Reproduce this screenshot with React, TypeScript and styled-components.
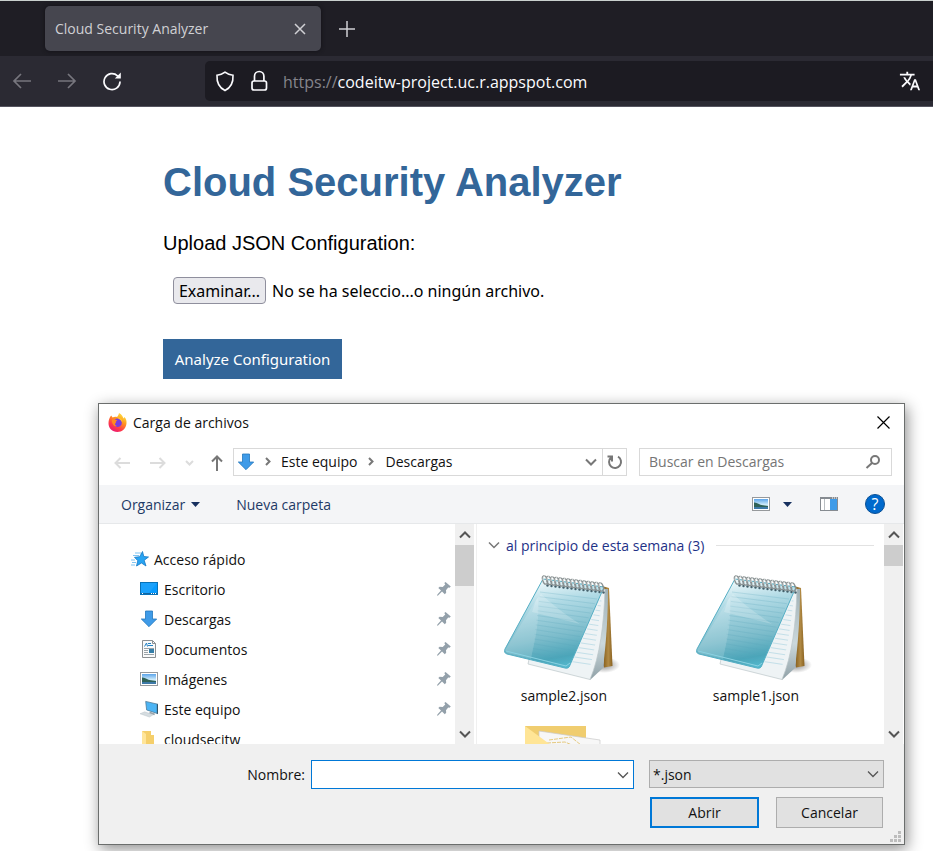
import React from "react";
import styled, { createGlobalStyle } from "styled-components";

const uiFont = `"Open Sans", "Noto Sans", sans-serif`;

const GlobalStyle = createGlobalStyle`
  * { box-sizing: border-box; }
  body { margin: 0; background: #fff; }
  button, input, select { font: inherit; color: inherit; margin: 0; }
  button { padding: 0; border: 0; background: none; cursor: pointer; }
  svg { display: block; flex: none; }
`;

/* ---------- browser chrome ---------- */

const Page = styled.div`
  position: relative;
  min-height: 100vh;
  overflow: hidden;
  font-family: ${uiFont};
`;

const TabStrip = styled.div`
  display: flex;
  align-items: center;
  gap: 12px;
  height: 56px;
  padding: 0 45px;
  background: #1f1e25;
  border-top: 1px solid #c9d0ce;
`;

const Tab = styled.div`
  display: flex;
  align-items: center;
  justify-content: space-between;
  width: 276px;
  height: 45px;
  padding: 0 11px 0 10px;
  border-radius: 5px;
  background: #46464f;
  box-shadow: 0 0 4px #111016;
  color: #d0d0d4;
  font-size: 14px;
`;

const ChromeButton = styled.button<{ $size: number; $color: string }>`
  display: grid;
  place-items: center;
  width: ${(p) => p.$size}px;
  height: ${(p) => p.$size}px;
  color: ${(p) => p.$color};
`;

const NavBar = styled.div`
  display: flex;
  align-items: center;
  height: 51px;
  padding-left: 9px;
  background: #2b2a33;
  border-bottom: 1px solid #55545f;
`;

const NavButtons = styled.div`
  display: flex;
  gap: 19px;
  width: 196px;
  flex: none;
`;

const AddressBar = styled.div`
  display: flex;
  align-items: center;
  flex: 1;
  gap: 15px;
  height: 40px;
  padding: 0 11px 0 10px;
  border-radius: 5px 0 0 5px;
  background: #1c1b22;
  color: #fbfbfe;
`;

const Address = styled.span`
  flex: 1;
  padding-top: 2px;
  font-size: 16px;
`;

const Scheme = styled.span`
  color: #85858c;
`;

/* ---------- web page ---------- */

const Main = styled.main`
  padding: 51px 163px 0;
`;

const Title = styled.h1`
  margin: 0;
  color: #369;
  font: bold 40px/48px "Liberation Sans", Arial, sans-serif;
`;

const UploadLabel = styled.label`
  display: block;
  margin-top: 25px;
  font: 20px/24px "Liberation Sans", Arial, sans-serif;
`;

const FilePicker = styled.div`
  display: flex;
  align-items: center;
  gap: 6px;
  margin: 22px 0 35px;
  padding-left: 10px;
  font-family: "Noto Sans", sans-serif;
  font-size: 16px;
  white-space: nowrap;
`;

const HiddenFile = styled.input`
  position: absolute;
  width: 1px;
  height: 1px;
  opacity: 0;
`;

const BrowseButton = styled.label`
  display: grid;
  place-items: center;
  width: 93px;
  height: 27px;
  border: 1px solid #8f8f9d;
  border-radius: 4px;
  background: #e9e9ed;
`;

const AnalyzeButton = styled.button`
  width: 179px;
  height: 40px;
  background: #369;
  color: #fff;
  font-family: "Noto Sans", sans-serif;
  font-size: 15px;
  white-space: nowrap;
`;

/* ---------- file dialog ---------- */

const Dialog = styled.section`
  position: absolute;
  top: 403px;
  left: 98px;
  right: 28px;
  border: 1px solid #6b6e6d;
  background: #fff;
  box-shadow: 2px 4px 14px rgba(0, 0, 0, 0.45);
  color: #111;
  font-size: 14px;
`;

const DialogHead = styled.header`
  display: flex;
  align-items: center;
  gap: 6px;
  height: 36px;
  padding: 0 14px 0 9px;
`;

const DialogTitle = styled.h2`
  flex: 1;
  margin: 0;
  font-size: 14px;
  font-weight: 400;
`;

const IconButton = styled.button<{ $w?: number }>`
  display: grid;
  place-items: center;
  width: ${(p) => p.$w ?? 20}px;
  height: 24px;
`;

const LocationRow = styled.div`
  display: flex;
  align-items: center;
  height: 45px;
  padding: 0 12px 2px;
`;

const History = styled.div`
  display: flex;
  align-items: center;
  justify-content: space-between;
  width: 115px;
  padding: 2px 3px 0 1px;
  flex: none;
`;

const PathBox = styled.nav`
  display: flex;
  align-items: center;
  flex: 1;
  height: 28px;
  margin: 0 12px 0 7px;
  border: 1px solid #d9d9d9;
`;

const Crumbs = styled.div`
  display: flex;
  align-items: center;
  flex: 1;
  gap: 10px;
  padding-left: 3px;
`;

const CrumbArrow = styled.span`
  padding: 0 1px;
`;

const Refresh = styled.button`
  display: grid;
  place-items: center;
  width: 24px;
  height: 26px;
  border-left: 1px solid #d9d9d9;
`;

const SearchBox = styled.label`
  display: flex;
  align-items: center;
  width: 253px;
  height: 28px;
  padding: 0 10px 0 9px;
  border: 1px solid #d9d9d9;
`;

const SearchInput = styled.input`
  flex: 1;
  min-width: 0;
  padding: 0;
  border: 0;
  outline: 0;
  background: none;
  &::placeholder { color: #757575; opacity: 1; }
`;

const Toolbar = styled.div`
  display: flex;
  align-items: center;
  height: 39px;
  padding: 0 19px 0 22px;
  border-bottom: 1px solid #e6e8ea;
  background: #f4f5f7;
  color: #1e3a66;
`;

const ToolButton = styled.button<{ $gap?: number }>`
  display: flex;
  align-items: center;
  gap: 6px;
  margin-right: ${(p) => p.$gap ?? 0}px;
`;

const Spacer = styled.div`
  flex: 1;
`;

const Help = styled.button`
  width: 20px;
  height: 20px;
  border: 1px solid #0a4f94;
  border-radius: 50%;
  background: #0069cc;
  color: #fff;
  font-size: 16px;
  line-height: 18px;
`;

const Panes = styled.div`
  display: flex;
  height: 220px;
  padding-right: 1px;
  overflow: hidden;
`;

const Tree = styled.ul`
  width: 356px;
  flex: none;
  margin: 0;
  padding: 20px 4px 0 32px;
  list-style: none;
`;

const TreeRow = styled.li<{ $nested?: boolean }>`
  display: flex;
  align-items: center;
  gap: ${(p) => (p.$nested ? 6 : 5)}px;
  height: 30px;
  padding-left: ${(p) => (p.$nested ? 9 : 0)}px;
`;

const TreeLink = styled.a`
  flex: 1;
  color: inherit;
  text-decoration: none;
`;

const ScrollTrack = styled.div`
  display: flex;
  flex-direction: column;
  width: 19px;
  flex: none;
  background: #f0f0f0;
`;

const ScrollStep = styled.button`
  display: grid;
  place-items: center;
  height: 21px;
`;

const ScrollThumb = styled.div<{ $h: number }>`
  height: ${(p) => p.$h}px;
  background: #cdcdcd;
`;

const Files = styled.div`
  flex: 1;
  min-width: 0;
  margin-left: 2px;
  padding: 9px 10px 0 11px;
  border-left: 1px solid #f0f0f0;
`;

const GroupHeading = styled.div`
  display: flex;
  align-items: center;
  gap: 6px;
  height: 24px;
  color: #1e3287;
  white-space: nowrap;
  &::after {
    content: "";
    flex: 1;
    height: 1px;
    margin-left: 6px;
    background: #e2e2e2;
  }
`;

const Tiles = styled.div`
  display: grid;
  grid-template-columns: repeat(auto-fill, 120px);
  column-gap: 72px;
  row-gap: 20px;
  padding: 15px 0 0 16px;
`;

const Tile = styled.button`
  display: flex;
  flex-direction: column;
  align-items: center;
  gap: 2px;
  line-height: 20px;
`;

const Footer = styled.footer`
  display: grid;
  grid-template-columns: 1fr 235px;
  gap: 8px 15px;
  height: 100px;
  padding: 16px 20px 15px;
  align-content: start;
  background: #f0f0f0;
`;

const NameField = styled.div`
  display: flex;
  align-items: center;
  justify-content: flex-end;
  gap: 6px;
`;

const Combo = styled.div<{ $active?: boolean }>`
  display: grid;
  align-items: center;
  width: ${(p) => (p.$active ? "323px" : "auto")};
  height: ${(p) => (p.$active ? 29 : 28)}px;
  border: 1px solid ${(p) => (p.$active ? "#0078d7" : "#adadad")};
  background: ${(p) => (p.$active ? "#fff" : "#e1e1e1")};
  & > * { grid-area: 1 / 1; }
  & > svg { justify-self: end; margin-right: 4px; pointer-events: none; }
`;

const NameInput = styled.input`
  width: 100%;
  padding: 0 24px 0 4px;
  border: 0;
  outline: 0;
  background: none;
`;

const TypeSelect = styled.select`
  width: 100%;
  height: 26px;
  padding: 0 3px;
  appearance: none;
  border: 0;
  background: none;
`;

const Actions = styled.div`
  grid-column: 2;
  display: flex;
  gap: 17px;
  padding: 0 1px;
`;

const ActionButton = styled.button<{ $primary?: boolean }>`
  flex: 1;
  height: 31px;
  border: ${(p) => (p.$primary ? "2px solid #0078d7" : "1px solid #adadad")};
  background: #e1e1e1;
`;

const Grip = styled.div`
  position: absolute;
  right: 3px;
  bottom: 2px;
`;

/* ---------- icons ---------- */

type LineProps = { d: string; w?: number; h?: number; color?: string; stroke?: number };

const Line = ({ d, w = 20, h = 20, color = "currentColor", stroke = 2 }: LineProps) => (
  <svg width={w} height={h} viewBox={`0 0 ${w} ${h}`} fill="none" stroke={color} strokeWidth={stroke} aria-hidden="true">
    <path d={d} />
  </svg>
);

const Chevron = ({ color = "#555", stroke = 1.5 }: { color?: string; stroke?: number }) => (
  <Line w={12} h={8} d="M1 1.5L6 6.5L11 1.5" color={color} stroke={stroke} />
);

const Caret = () => (
  <svg width="9" height="5" viewBox="0 0 9 5" aria-hidden="true">
    <path d="M0 0h9L4.500 5z" fill="#17305f" />
  </svg>
);

const ReloadIcon = () => (
  <svg width="20" height="20" viewBox="0 0 20 20" aria-hidden="true">
    <path d="M18 11A8 8 0 1 1 15.500 4.800" fill="none" stroke="#fbfbfe" strokeWidth="1.700" strokeLinecap="round" />
    <path d="M18.800 1.500v6H12.800z" fill="#fbfbfe" />
  </svg>
);

const ShieldIcon = () => (
  <Line d="M10 1.200C12.300 3 15 4 18 4.200C18.400 11 16 16.500 10 19.500C4 16.500 1.600 11 2 4.200C5 4 7.700 3 10 1.200Z" h={21} stroke={1.600} />
);

const LockIcon = () => (
  <svg width="18" height="22" viewBox="0 0 18 22" fill="none" stroke="#fbfbfe" strokeWidth="1.700" aria-hidden="true">
    <rect x="2" y="11" width="14.500" height="9" rx="2" />
    <path d="M4.500 11V6.300a4.700 4.800 0 0 1 9.400 0V11" />
  </svg>
);

const TranslateIcon = () => (
  <svg width="22" height="22" viewBox="0 0 24 24" fill="#fbfbfe" aria-hidden="true">
    <path d="M12.870 15.070l-2.540-2.510.030-.030A17.520 17.520 0 0 0 14.070 6H17V4h-7V2H8v2H1v2h11.170C11.500 7.920 10.440 9.750 9 11.350 8.070 10.320 7.300 9.190 6.690 8h-2c.730 1.630 1.730 3.170 2.980 4.560l-5.090 5.020L4 19l5-5 3.110 3.110.760-2.040zM18.500 10h-2L12 22h2l1.120-3h4.750L21 22h2l-4.500-12zm-2.620 7l1.620-4.330L19.120 17h-3.240z" />
  </svg>
);

const FirefoxIcon = () => (
  <svg width="19" height="19" viewBox="0 0 19 19" aria-hidden="true">
    <defs>
      <linearGradient id="ffBody" x1="0.8" y1="0" x2="0.2" y2="1">
        <stop offset="0" stopColor="#fff04a" />
        <stop offset="0.35" stopColor="#ff9a1f" />
        <stop offset="0.7" stopColor="#ff3b48" />
        <stop offset="1" stopColor="#e8127b" />
      </linearGradient>
    </defs>
    <path d="M3.200 2.500L4.600 4.500C6 3.800 7.500 3.700 9 4C10 3.200 10.700 1.700 11 0C14 1.500 15 4 15.500 5.500L16.500 4C18.300 6 18.700 8 18.500 10.500C18 15.500 14 19 9.400 19C4.200 19 .5 15 .5 10.200C.5 7 1.500 4.500 3.200 2.500Z" fill="url(#ffBody)" />
    <circle cx="9.500" cy="9.800" r="4.300" fill="#7a3be0" />
    <path d="M4 6.500C6 5.800 8 6.500 9.500 7.800C8 8 7.500 8.800 8 9.800C6.600 10.400 6.700 12.600 9 13C6.500 14.500 3.500 11 4 6.500Z" fill="#ff8a21" />
    <path d="M9 4.500C12 4 14.500 6 14.300 9.500C13.300 7 11.500 6.200 9 4.500Z" fill="#ffc52e" />
  </svg>
);

const DownArrowIcon = () => (
  <svg width="18" height="18" viewBox="0 0 18 18" aria-hidden="true">
    <path d="M5.500 1h7v8h4.200L9 16.700L1.300 9h4.200z" fill="#3f9be8" stroke="#2377bd" strokeWidth="0.8" />
  </svg>
);

const StarIcon = () => (
  <svg width="18" height="18" viewBox="0 0 18 18" aria-hidden="true">
    <path d="M4 3h6M2 5.500h6M0 10h4M1 12.500h4M0 15h4" stroke="#7fc4f2" />
    <path d="M11.500 1.500l1.300 5l4.700.5l-4.300 3.300l1.800 5.700L10.500 13L5.500 16l1.300-5.300L3.500 7.300l5.200-.6z" fill="#28a4f2" stroke="#1577c4" strokeWidth="0.800" />
  </svg>
);

const DesktopIcon = () => (
  <svg width="18" height="14" viewBox="0 0 18 14" aria-hidden="true">
    <rect x="0.500" y="0.500" width="17" height="12" fill="#1ba1fb" stroke="#0872b8" />
    <path d="M17 1v11H8z" fill="#079bff" />
    <path d="M1 11.500h16" stroke="#1265a0" />
    <path d="M2 11.500h2M11 11.500h5" stroke="#fff" strokeDasharray="1 1" />
  </svg>
);

const DocumentIcon = () => (
  <svg width="18" height="18" viewBox="0 0 18 18" aria-hidden="true">
    <path d="M2.500.5h10l3 3v14h-13z" fill="#fafafa" stroke="#8b8f92" />
    <path d="M12.500.5v3h3" fill="none" stroke="#8b8f92" />
    <path d="M4.500 6.500L6.500 3l1 3.500M8 3.500h3M8 5.500h5" fill="none" stroke="#2483c6" />
    <path d="M4 8.500h10M4 10.500h4M4 12.500h4M4 14.500h10" stroke="#9ba3a8" />
    <rect x="9" y="9" width="5" height="4" fill="#357ea8" />
  </svg>
);

const PictureIcon = () => (
  <svg width="18" height="14" viewBox="0 0 18 14" aria-hidden="true">
    <defs>
      <linearGradient id="sky" x2="0" y2="1">
        <stop offset="0" stopColor="#5ba4ea" />
        <stop offset="0.6" stopColor="#d6f0fb" />
        <stop offset="1" stopColor="#4282ae" />
      </linearGradient>
    </defs>
    <rect x="0.500" y="0.500" width="17" height="13" fill="#fff" stroke="#96999c" />
    <rect x="2" y="2" width="14" height="10" fill="url(#sky)" />
    <path d="M2 5.500C5 5 7 8 11 8.200L16 9v1H2z" fill="#2f6258" />
    <path d="M2 10h14v2H2z" fill="#3d79a8" />
  </svg>
);

const ComputerIcon = () => (
  <svg width="18" height="18" viewBox="0 0 19 18" aria-hidden="true">
    <path d="M6 1l13 3v10L7 10z" fill="#4cb4f4" stroke="#4c7793" strokeWidth="0.800" />
    <path d="M18.500 4v10" stroke="#335469" strokeWidth="1.500" />
    <path d="M11 12l5 2l-1 1.500l-6-2z" fill="#98a3aa" />
    <path d="M0 14l5-2l9 3l-4 2.500z" fill="#d5dce0" stroke="#b9c3c9" strokeWidth="0.500" />
  </svg>
);

const SmallFolderIcon = () => (
  <svg width="18" height="18" viewBox="0 0 18 18" aria-hidden="true">
    <path d="M2 1h9v4h3v13H2z" fill="#f5cf6b" />
    <path d="M2 1l4 3v14H2z" fill="#ffe59a" />
  </svg>
);

const PinIcon = () => (
  <svg width="14" height="14" viewBox="0 0 14 14" aria-hidden="true">
    <path d="M8.500 0L13.800 4.500L12.500 5.800L11.200 5.500L9 8.200L9.200 10.800L7.800 12.200L5 9.600L1 13.500L0 13.800L.4 12.600L4 8.500L1.300 6L2.700 4.700L5.700 4.900L8.300 2.500L7.300 1Z" fill="#93a0aa" />
  </svg>
);

const PreviewPaneIcon = () => (
  <svg width="18" height="14" viewBox="0 0 18 14" aria-hidden="true">
    <rect x="0.500" y="0.500" width="17" height="13" fill="#fff" stroke="#868b91" />
    <path d="M0 1h18" stroke="#868b91" strokeWidth="2" />
    <path d="M4.500 2v11" stroke="#b9bec2" />
    <rect x="10" y="2" width="7" height="11" fill="#3f9be8" />
    <path d="M12 1h5" stroke="#fff" strokeDasharray="1 1" />
  </svg>
);

const rings = Array.from({ length: 15 }, (_, i) => ({ x: 41 + i * 4, y: 6 + i * 0.5 }));
const rules = Array.from({ length: 14 }, (_, i) => i);

const NotepadIcon = () => (
  <svg width="120" height="112" viewBox="0 0 120 112" aria-hidden="true">
    <defs>
      <linearGradient id="npCover" x1="0.35" y1="0" x2="0.55" y2="1">
        <stop offset="0" stopColor="#f3fbfd" />
        <stop offset="0.28" stopColor="#b0dae5" />
        <stop offset="0.65" stopColor="#7cbccb" />
        <stop offset="0.88" stopColor="#4ba5b9" />
        <stop offset="1" stopColor="#54b9ce" />
      </linearGradient>
      <linearGradient id="npBack" x2="1" y2="0">
        <stop offset="0" stopColor="#7b5311" />
        <stop offset="0.6" stopColor="#b18a45" />
        <stop offset="1" stopColor="#8a6220" />
      </linearGradient>
      <linearGradient id="npEdge" x2="0" y2="1">
        <stop offset="0" stopColor="#9fb0b5" />
        <stop offset="0.6" stopColor="#cbd8dc" />
        <stop offset="1" stopColor="#8fa0a6" />
      </linearGradient>
      <radialGradient id="npShadow">
        <stop offset="0" stopColor="#000" stopOpacity="0.45" />
        <stop offset="1" stopColor="#000" stopOpacity="0" />
      </radialGradient>
      <clipPath id="npSheet">
        <path d="M98 24L65 97L28 91L26 92L83 103C91 84 95 50 98 24Z" />
      </clipPath>
    </defs>
    <ellipse cx="100" cy="93" rx="16" ry="8" fill="url(#npShadow)" />
    <path d="M98 14L105 16L108.500 94L100 95.500Z" fill="url(#npBack)" />
    <path d="M100 17L104 17C104 45 102 72 99 96L86 108Z" fill="url(#npEdge)" />
    <path d="M101 17C100 52 96 84 86 107.500L24 92L40 20Z" fill="#eef3f5" stroke="#bcc5c9" strokeWidth="0.700" />
    <g clipPath="url(#npSheet)" stroke="#b7d9e5" strokeWidth="0.800">
      {rules.map((i) => (
        <path key={i} d={`M24 ${18 + i * 5}L104 ${30 + i * 5}`} />
      ))}
    </g>
    <path d="M39 7L100 15L66 93Q65 97 61 96L3 82Q-.5 81 1 77Z" fill="url(#npCover)" stroke="#55aec4" strokeWidth="1" />
    <g stroke="#5aa7bc" strokeWidth="0.500" opacity="0.5">
      {rules.map((i) => (
        <path key={i} d={`M${36 - i * 0.600} ${20 + i * 4.700}L${93 - i * 2.100} ${27 + i * 4.700}`} />
      ))}
    </g>
    <path d="M34 25C36 48 31 68 27 87L3 81L1 78Z" fill="#fff" opacity="0.15" />
    <path d="M37 22C48 32 60 42 76 52L28 40L32 28Z" fill="#fff" opacity="0.2" />
    <path d="M2 79L62 94L66 91" fill="none" stroke="#8bd2e2" strokeWidth="1" />
    {rings.map(({ x, y }) => (
      <g key={x}>
        <circle cx={x + 2.500} cy={y + 7.500} r="1.200" fill="#44606b" />
        <ellipse cx={x} cy={y + 2} rx="2.300" ry="4.300" fill="none" stroke="#8a9192" strokeWidth="1.300" transform={`rotate(-18 ${x} ${y + 2})`} />
        <path d={`M${x - 2} ${y + 2}q-.5-4 2.500-4.500`} fill="none" stroke="#dfe4e4" strokeWidth="0.900" />
      </g>
    ))}
  </svg>
);

const FolderIcon = () => (
  <svg width="82" height="80" viewBox="0 0 82 80" aria-hidden="true">
    <path d="M2 0h61v80H2z" fill="#f0cd6f" />
    <path d="M16 5L77 14V80H16z" fill="#f7f7f7" stroke="#c9c9c9" strokeWidth="0.700" />
    <path d="M26 14L48 11L58 19M24 17L42 16L56 22" fill="none" stroke="#e5c97f" strokeDasharray="4 1" />
    <path d="M2 0L36 25V80H2z" fill="#ffe596" />
  </svg>
);

const GripIcon = () => (
  <svg width="11" height="11" viewBox="0 0 11 11" fill="#bdbdbd" aria-hidden="true">
    <path d="M8 0h3v3H8zM4 4h3v3H4zM8 4h3v3H8zM0 8h3v3H0zM4 8h3v3H4zM8 8h3v3H8z" />
  </svg>
);

/* ---------- composition ---------- */

const places = [
  { name: "Escritorio", icon: <DesktopIcon />, pinned: true },
  { name: "Descargas", icon: <DownArrowIcon />, pinned: true },
  { name: "Documentos", icon: <DocumentIcon />, pinned: true },
  { name: "Imágenes", icon: <PictureIcon />, pinned: true },
  { name: "Este equipo", icon: <ComputerIcon />, pinned: true },
  { name: "cloudsecitw", icon: <SmallFolderIcon />, pinned: false },
];

const Scrollbar = ({ thumb }: { thumb: number }) => (
  <ScrollTrack>
    <ScrollStep aria-label="Subir">
      <Line w={12} h={8} d="M1 6.500L6 1.500L11 6.500" color="#555" />
    </ScrollStep>
    <ScrollThumb $h={thumb} />
    <Spacer />
    <ScrollStep aria-label="Bajar">
      <Chevron stroke={2} />
    </ScrollStep>
  </ScrollTrack>
);

const BrowserChrome = () => (
  <>
    <TabStrip>
      <Tab>
        <span>Cloud Security Analyzer</span>
        <ChromeButton $size={20} $color="#d0d0d4" aria-label="Cerrar pestaña">
          <Line w={12} h={12} d="M1 1L11 11M11 1L1 11" stroke={1.500} />
        </ChromeButton>
      </Tab>
      <ChromeButton $size={28} $color="#d0d0d4" aria-label="Nueva pestaña">
        <Line w={16} h={16} d="M8 0V16M0 8H16" stroke={1.500} />
      </ChromeButton>
    </TabStrip>
    <NavBar>
      <NavButtons>
        <ChromeButton $size={26} $color="#77767e" aria-label="Atrás">
          <Line d="M19 10H2M9 3L2 10L9 17" stroke={1.700} />
        </ChromeButton>
        <ChromeButton $size={26} $color="#77767e" aria-label="Adelante">
          <Line d="M1 10H18M11 3L18 10L11 17" stroke={1.700} />
        </ChromeButton>
        <ChromeButton $size={26} $color="#fbfbfe" aria-label="Recargar">
          <ReloadIcon />
        </ChromeButton>
      </NavButtons>
      <AddressBar>
        <ShieldIcon />
        <LockIcon />
        <Address>
          <Scheme>https://</Scheme>codeitw-project.uc.r.appspot.com
        </Address>
        <ChromeButton $size={24} $color="#fbfbfe" aria-label="Traducir">
          <TranslateIcon />
        </ChromeButton>
      </AddressBar>
    </NavBar>
  </>
);

const FileDialog = () => (
  <Dialog role="dialog" aria-labelledby="dialog-title">
    <DialogHead>
      <FirefoxIcon />
      <DialogTitle id="dialog-title">Carga de archivos</DialogTitle>
      <IconButton $w={14} aria-label="Cerrar">
        <Line w={13} h={13} d="M.5 .5L12.500 12.500M12.500 .5L.5 12.500" color="#000" stroke={1.200} />
      </IconButton>
    </DialogHead>
    <LocationRow>
      <History>
        <IconButton aria-label="Atrás">
          <Line w={16} h={12} d="M16 6H1.500M6.500 1L1.500 6L6.500 11" color="#dcdcdc" />
        </IconButton>
        <IconButton aria-label="Adelante">
          <Line w={16} h={12} d="M0 6H14.500M9.500 1L14.500 6L9.500 11" color="#dcdcdc" />
        </IconButton>
        <IconButton $w={12} aria-label="Ubicaciones recientes">
          <Line w={9} h={6} d="M1 1L4.500 4.500L8 1" color="#dcdcdc" />
        </IconButton>
        <IconButton $w={12} aria-label="Subir un nivel">
          <Line w={12} h={16} d="M6 16V1.500M1 6.500L6 1.500L11 6.500" color="#777" />
        </IconButton>
      </History>
      <PathBox aria-label="Ruta">
        <Crumbs>
          <DownArrowIcon />
          <Line w={6} h={9} d="M1 1L4.500 4.500L1 8" color="#777" />
          <button>Este equipo</button>
          <CrumbArrow>
            <Line w={6} h={9} d="M1 1L4.500 4.500L1 8" color="#777" />
          </CrumbArrow>
          <button>Descargas</button>
        </Crumbs>
        <IconButton $w={22} aria-label="Ubicaciones anteriores">
          <Chevron color="#777" stroke={2} />
        </IconButton>
        <Refresh aria-label="Actualizar">
          <Line w={16} h={16} d="M11 2.700A6 6 0 1 1 4 3.500M0.500 2.500H5V7.500" color="#777" />
        </Refresh>
      </PathBox>
      <SearchBox>
        <SearchInput placeholder="Buscar en Descargas" aria-label="Buscar en Descargas" />
        <svg width="16" height="16" viewBox="0 0 16 16" fill="none" stroke="#777" strokeWidth="2" aria-hidden="true">
          <circle cx="10" cy="6" r="4" />
          <path d="M7 9L1.500 14" />
        </svg>
      </SearchBox>
    </LocationRow>
    <Toolbar>
      <ToolButton $gap={36}>
        Organizar <Caret />
      </ToolButton>
      <ToolButton>Nueva carpeta</ToolButton>
      <Spacer />
      <ToolButton $gap={13} aria-label="Cambiar vista">
        <PictureIcon />
      </ToolButton>
      <ToolButton $gap={28} aria-label="Más opciones">
        <Caret />
      </ToolButton>
      <ToolButton $gap={27} aria-label="Panel de vista previa">
        <PreviewPaneIcon />
      </ToolButton>
      <Help aria-label="Ayuda">?</Help>
    </Toolbar>
    <Panes>
      <Tree>
        <TreeRow>
          <StarIcon />
          <TreeLink href="#acceso">Acceso rápido</TreeLink>
        </TreeRow>
        {places.map((p) => (
          <TreeRow key={p.name} $nested>
            {p.icon}
            <TreeLink href={`#${p.name}`}>{p.name}</TreeLink>
            {p.pinned && <PinIcon />}
          </TreeRow>
        ))}
      </Tree>
      <Scrollbar thumb={41} />
      <Files>
        <GroupHeading>
          <Chevron color="#777" />
          <span>al principio de esta semana (3)</span>
        </GroupHeading>
        <Tiles>
          <Tile>
            <NotepadIcon />
            sample2.json
          </Tile>
          <Tile>
            <NotepadIcon />
            sample1.json
          </Tile>
          <Tile aria-label="Carpeta">
            <FolderIcon />
          </Tile>
        </Tiles>
      </Files>
      <Scrollbar thumb={21} />
    </Panes>
    <Footer>
      <NameField>
        <label htmlFor="file-name">Nombre:</label>
        <Combo $active>
          <NameInput id="file-name" type="text" />
          <Chevron stroke={1.300} />
        </Combo>
      </NameField>
      <Combo>
        <TypeSelect aria-label="Tipo de archivo">
          <option>*.json</option>
        </TypeSelect>
        <Chevron stroke={1.300} />
      </Combo>
      <Actions>
        <ActionButton $primary>Abrir</ActionButton>
        <ActionButton>Cancelar</ActionButton>
      </Actions>
    </Footer>
    <Grip>
      <GripIcon />
    </Grip>
  </Dialog>
);

export default function App() {
  return (
    <Page>
      <GlobalStyle />
      <BrowserChrome />
      <Main>
        <Title>Cloud Security Analyzer</Title>
        <UploadLabel htmlFor="config-file">Upload JSON Configuration:</UploadLabel>
        <FilePicker>
          <HiddenFile id="config-file" type="file" accept=".json" />
          <BrowseButton htmlFor="config-file">Examinar...</BrowseButton>
          <span>No se ha seleccio...o ningún archivo.</span>
        </FilePicker>
        <AnalyzeButton>Analyze Configuration</AnalyzeButton>
      </Main>
      <FileDialog />
    </Page>
  );
}
